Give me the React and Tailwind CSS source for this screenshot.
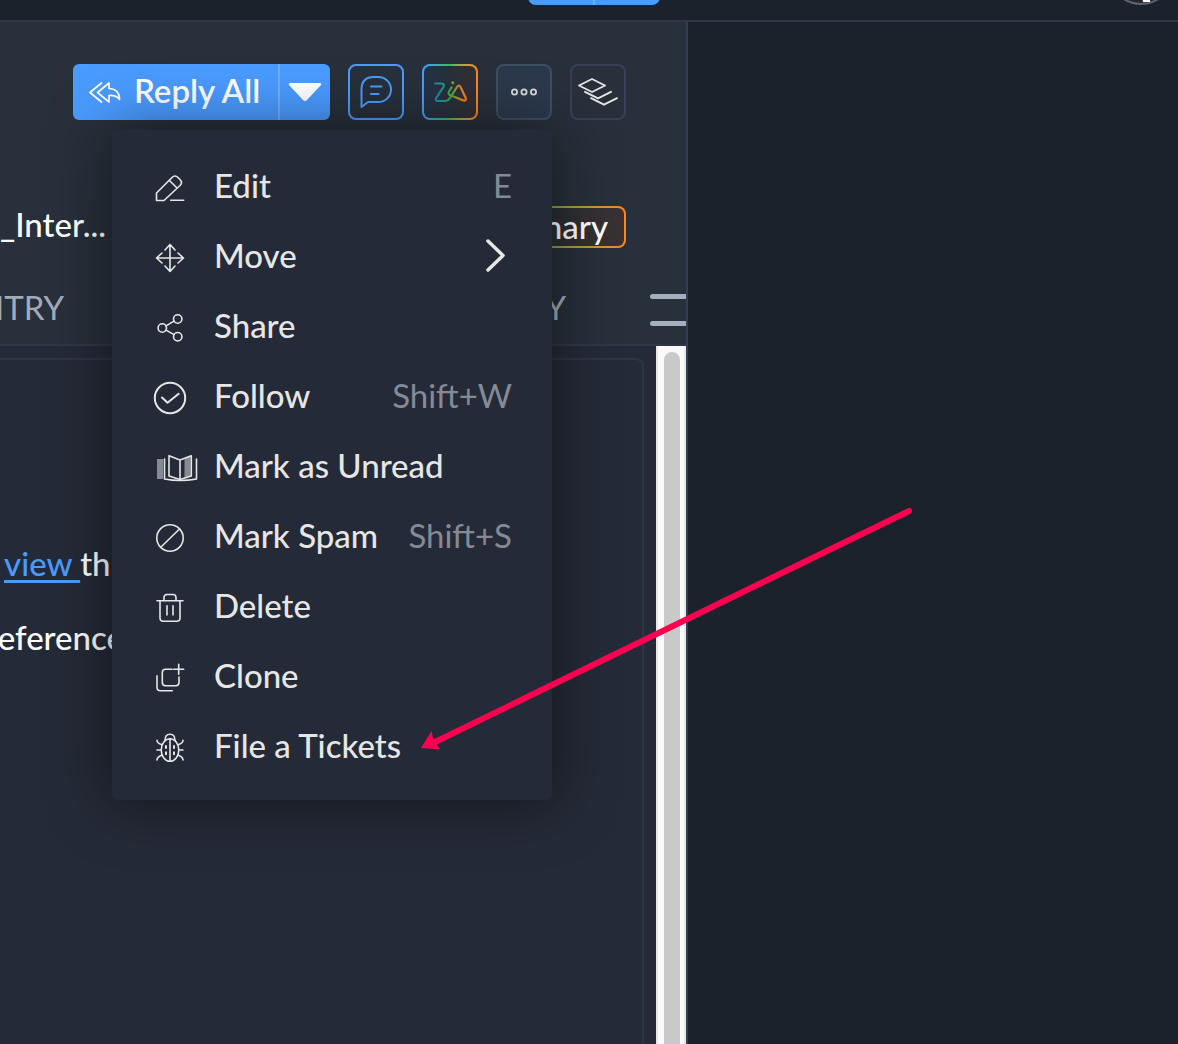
const menuItems = [
  { label: "Edit", shortcut: "E", icon: "edit" },
  { label: "Move", icon: "move", submenu: true },
  { label: "Share", icon: "share" },
  { label: "Follow", shortcut: "Shift+W", icon: "follow" },
  { label: "Mark as Unread", icon: "unread" },
  { label: "Mark Spam", shortcut: "Shift+S", icon: "spam" },
  { label: "Delete", icon: "trash" },
  { label: "Clone", icon: "clone" },
  { label: "File a Tickets", icon: "bug" },
];

const icons = {
  edit: (
    <>
      <path d="M6.5 33.5V26L22 10.5q3-3 6 0l2 2q3 3 0 6L14 33.5z" />
      <path d="M19.5 13.5l7 7M20.7 33.3h13" />
    </>
  ),
  move: (
    <path d="M20 7.5v27M6.5 21h27M15 13l5-5.500 5 5.500M15 29l5 5.500 5-5.500M12 16l-5.500 5 5.500 5M28 16l5.500 5-5.500 5" />
  ),
  share: (
    <>
      <circle cx="12.300" cy="21" r="4.200" />
      <circle cx="27.700" cy="12" r="4.200" />
      <circle cx="27.700" cy="29.700" r="4.200" />
      <path d="M16 18.900l8-4.800M16 23.100l8 4.500" />
    </>
  ),
  follow: (
    <g strokeWidth="2">
      <circle cx="20" cy="21" r="15.200" />
      <path d="M12 20.500l5.500 5.300 11.200-9" />
    </g>
  ),
  unread: (
    <>
      <path d="M7 12h6v20H7zM34.500 11.500l6-2.500v20l-6 2z" fill="#858a95" stroke="none" />
      <path d="M14.500 12v20q15.500 3 32 0V12" />
      <path d="M30 13L19 8.700V29l11 3.500L41.300 29V8.700zV32.500" />
    </>
  ),
  spam: (
    <>
      <circle cx="20" cy="21" r="13.200" />
      <path d="M11 30l18.500-18" />
    </>
  ),
  trash: (
    <path d="M7 13.700h26M14 13.500v-3q0-3 3-3h6q3 0 3 3v3M10 13.700V31q0 3.300 3.300 3.300h13.400q3.300 0 3.300-3.300V13.700M17 18.700V28M23 18.700V28" />
  ),
  clone: (
    <path d="M22 12.300h-6.500q-3.200 0-3.200 3.200v10q0 3.200 3.200 3.200h10.300q3.200 0 3.200-3.200v-5.500M28.700 7.300v10M23.700 12.300h10M7 18.700v11.500q0 3.500 3.500 3.500h11.800" />
  ),
  bug: (
    <>
      <path d="M20 12v22.300M15 13.500q0-6.200 5-6.200t5 6.200" />
      <ellipse cx="20" cy="23" rx="8.800" ry="11.300" />
      <path d="M7 13.300q0 3 5 4.500M7 23h4M7 33q0-3 5-5M33 13.300q0 3-5 4.500M33 23h-4M33 33q0-3-5-5" />
      <path d="M16 18.900v2M24 18.900v2M16 25.200v2M24 25.200v2" strokeWidth="2" />
    </>
  ),
};

function MenuIcon({ name }) {
  return (
    <svg
      className="h-10 w-14 shrink-0"
      viewBox="0 0 56 40"
      fill="none"
      stroke="currentColor"
      strokeWidth="1.600"
      strokeLinecap="round"
      strokeLinejoin="round"
      aria-hidden="true"
    >
      {icons[name]}
    </svg>
  );
}

function ActionMenu() {
  return (
    <div
      role="menu"
      className="absolute right-[134px] top-[66px] z-10 w-[440px] rounded-md bg-[#242a37] pb-[18px] pt-[22px] shadow-[0_0_60px_rgba(0,0,0,0.5)]"
    >
      {menuItems.map((item) => (
        <button
          key={item.label}
          type="button"
          role="menuitem"
          className="flex h-[70px] w-full items-center pl-[38px] pr-10 text-left text-[33px] font-medium leading-10 text-[#e6e6e6]"
        >
          <MenuIcon name={item.icon} />
          <span className="flex-1 whitespace-nowrap pb-1 pl-2">{item.label}</span>
          {item.shortcut && (
            <span className="whitespace-nowrap pb-1 font-normal text-[#858a95]">{item.shortcut}</span>
          )}
          {item.submenu && (
            <svg
              className="mr-1 h-10 w-6"
              viewBox="0 0 24 40"
              fill="none"
              stroke="currentColor"
              strokeWidth="3.500"
              strokeLinecap="round"
              strokeLinejoin="round"
              aria-hidden="true"
            >
              <path d="M4 4l15 14.500L4 33" />
            </svg>
          )}
        </button>
      ))}
    </div>
  );
}

function Toolbar() {
  return (
    <div className="relative flex items-center justify-end gap-[18px] pr-[60px]">
      <div className="flex h-14 overflow-hidden rounded-md bg-[#4a9bff] text-white">
        <button type="button" className="flex w-[205px] items-center pl-[13px] text-[33px] font-semibold">
          <svg
            className="mr-3 h-8 w-9 shrink-0"
            viewBox="0 0 36 32"
            fill="none"
            stroke="currentColor"
            strokeWidth="1.700"
            strokeLinecap="round"
            strokeLinejoin="round"
            aria-hidden="true"
          >
            <path d="M15.500 7L4 16.500 15.500 26" />
            <path d="M23 7L11.500 16.500 23 26v-6.500q7-.500 10.500 4Q33.500 13 23 12.500z" />
          </svg>
          <span className="whitespace-nowrap pb-0.5">Reply All</span>
        </button>
        <button
          type="button"
          aria-label="More reply options"
          className="flex w-[52px] items-center justify-center border-l-2 border-[#6eb0ff]"
        >
          <svg className="h-6 w-9" viewBox="0 0 36 24" fill="currentColor" aria-hidden="true">
            <path d="M3.500 3h29q3 0 1 2.500L20 20q-2 2-4 0L2.500 5.500Q.5 3 3.500 3z" />
          </svg>
        </button>
      </div>

      <button
        type="button"
        aria-label="Comment"
        className="flex size-14 items-center justify-center rounded-lg border-2 border-[#4a9bff] text-[#4a9bff]"
      >
        <svg className="size-14 shrink-0" viewBox="0 0 56 56" fill="none" stroke="currentColor" strokeWidth="2" strokeLinecap="round" strokeLinejoin="round" aria-hidden="true">
          <path d="M13.500 43V25.500Q13.500 13 26 13h4.500a12.500 12.500 0 0 1 0 25H20z" />
          <path d="M23 22.500h10.500M23 30h7.500" />
        </svg>
      </button>

      <button
        type="button"
        aria-label="Zia"
        className="size-14 rounded-lg bg-linear-to-r from-[#4a9bff] via-[#41b95b] to-[#ff8420] p-0.5"
      >
        <span className="flex size-full items-center justify-center rounded-md bg-linear-to-r from-[#253348] via-[#27303a] to-[#352e35]">
          <svg className="size-14 shrink-0" viewBox="0 0 56 56" fill="none" strokeWidth="2.200" strokeLinecap="round" strokeLinejoin="round" aria-hidden="true">
            <defs>
              <linearGradient id="zia" gradientUnits="userSpaceOnUse" x1="12" y1="0" x2="44" y2="0">
                <stop offset="0" stopColor="#1b86ad" />
                <stop offset=".3" stopColor="#20958a" />
                <stop offset=".52" stopColor="#45a83e" />
                <stop offset=".75" stopColor="#c18b30" />
                <stop offset="1" stopColor="#ff7a1c" />
              </linearGradient>
            </defs>
            <g stroke="url(#zia)">
              <path d="M13 19.500h6q4 0 2.500 3.500l-7 10.500q-2 3.500 1.500 3.500h7.500q2.500 0 4-2.500l7.500-11.500q2-3 3.500 0l5 10.500q1.500 3.500-2 3L29 31.500q-3.500-1-2-4l2.500-4" />
              <path d="M30.500 18.500l.5.400" strokeWidth="2.800" />
            </g>
          </svg>
        </span>
      </button>

      <button
        type="button"
        aria-label="More actions"
        aria-expanded="true"
        className="flex size-14 items-center justify-center rounded-lg border-2 border-[#3e4e63] bg-[#2c394c] text-[#d5d8dc]"
      >
        <svg className="h-3 w-8" viewBox="0 0 32 12" fill="none" stroke="currentColor" strokeWidth="1.800" aria-hidden="true">
          <circle cx="6.500" cy="6" r="2.600" />
          <circle cx="16" cy="6" r="2.600" />
          <circle cx="25.500" cy="6" r="2.600" />
        </svg>
      </button>

      <button
        type="button"
        aria-label="Layers"
        className="flex size-14 items-center justify-center rounded-lg border-2 border-[#383f54] text-[#e6e6e6]"
      >
        <svg className="size-14 shrink-0" viewBox="0 0 56 56" fill="none" stroke="currentColor" strokeWidth="1.900" strokeLinecap="round" strokeLinejoin="round" aria-hidden="true">
          <path d="M9 21.500l13-6.500 13 6.500L22 28z" />
          <path d="M15 27.800l13 6.500 13-6.500M21 34.200l13 6.500 13-6.500" />
        </svg>
      </button>

      <ActionMenu />
    </div>
  );
}

function TicketPane() {
  return (
    <section className="flex min-w-0 flex-1 flex-col overflow-hidden border-r-2 border-[#343d52] bg-[#242a37] text-[33px] font-medium text-white">
      <div className="border-b-2 border-[#2e3648] bg-[#27303b] pt-[42px]">
        <Toolbar />
        <div className="mt-[86px] flex h-[42px] items-center justify-between pr-[60px]">
          <h1 className="pb-1">_Inter...</h1>
          <button
            type="button"
            className="h-full rounded-lg bg-linear-to-r from-[#4a9bff] via-[#5fa544] to-[#ff8420] p-0.5"
          >
            <span className="flex h-full items-center rounded-md bg-linear-to-r from-[#253348] via-[#262e31] to-[#3b3135] px-4">
              Summary
            </span>
          </button>
        </div>
        <nav className="mt-9 flex h-[60px] items-start font-normal text-[#a4abb8]">
          <a href="#time-entry" className="flex h-12 w-16 items-center justify-end">
            NTRY
          </a>
          <a href="#history" className="ml-auto flex h-12 items-center">
            HISTORY
          </a>
          <button type="button" aria-label="Tab list" className="ml-[84px] mt-[10px] flex w-9 flex-col gap-[22px]">
            <span className="h-[5px] w-full rounded-l-full bg-[#a4aebc]" />
            <span className="h-[5px] w-full rounded-l-full bg-[#a4aebc]" />
          </button>
        </nav>
      </div>

      <div className="flex flex-1">
        <div className="mr-3 mt-3 min-w-0 flex-1 overflow-hidden rounded-tr-lg border-r-2 border-t-2 border-[#2d3547] pt-[178px]">
          <p className="h-[74px] whitespace-nowrap pl-1 leading-[50px]">
            <a href="#view" className="whitespace-pre text-[#4a9bff] underline decoration-[3px] underline-offset-4">
              {"view "}
            </a>
            th
          </p>
          <p className="flex w-[124px] justify-end whitespace-nowrap leading-[50px]">eference</p>
        </div>
        <div className="w-[30px] border-x-2 border-x-[#e8e8e8] bg-[#fafafa] pl-1.5 pr-1 pt-1.5">
          <div className="h-full rounded-t-full bg-[#c9c9c9]" />
        </div>
      </div>
    </section>
  );
}

export default function App() {
  return (
    <div className="relative flex min-h-screen flex-col overflow-hidden bg-[#1c222b] font-['Lato',sans-serif]">
      <header className="flex h-[22px] items-end justify-end gap-[448px] overflow-hidden border-b-2 border-[#2f3648] pr-1 text-white">
        <div className="mb-[15px] flex h-14 w-[132px] shrink-0 overflow-hidden rounded-lg bg-[#4a9bff]">
          <button type="button" aria-label="Add ticket" className="flex-1" />
          <button type="button" aria-label="Add options" className="w-[67px] border-l-2 border-[#6eb0ff]" />
        </div>
        <button type="button" aria-label="Profile" className="mb-[15px] shrink-0">
          <svg className="size-[66px]" viewBox="0 0 66 66" aria-hidden="true">
            <circle cx="33" cy="33" r="32" fill="#2b2329" stroke="#5a6273" strokeWidth="2" />
            <path d="M34 58h8v5h-7z" fill="#fff" />
          </svg>
        </button>
      </header>

      <main className="flex flex-1">
        <TicketPane />
        <aside className="w-[490px] shrink-0" />
      </main>

      <svg
        className="pointer-events-none absolute right-[260px] top-[500px] z-20 h-[256px] w-[504px]"
        viewBox="414 500 504 256"
        aria-hidden="true"
      >
        <path d="M909 511L433 743" stroke="#ff0050" strokeWidth="6" strokeLinecap="round" />
        <path d="M421 748l10.500-17 2 9.500 7 9z" fill="#ff0050" />
      </svg>
    </div>
  );
}
